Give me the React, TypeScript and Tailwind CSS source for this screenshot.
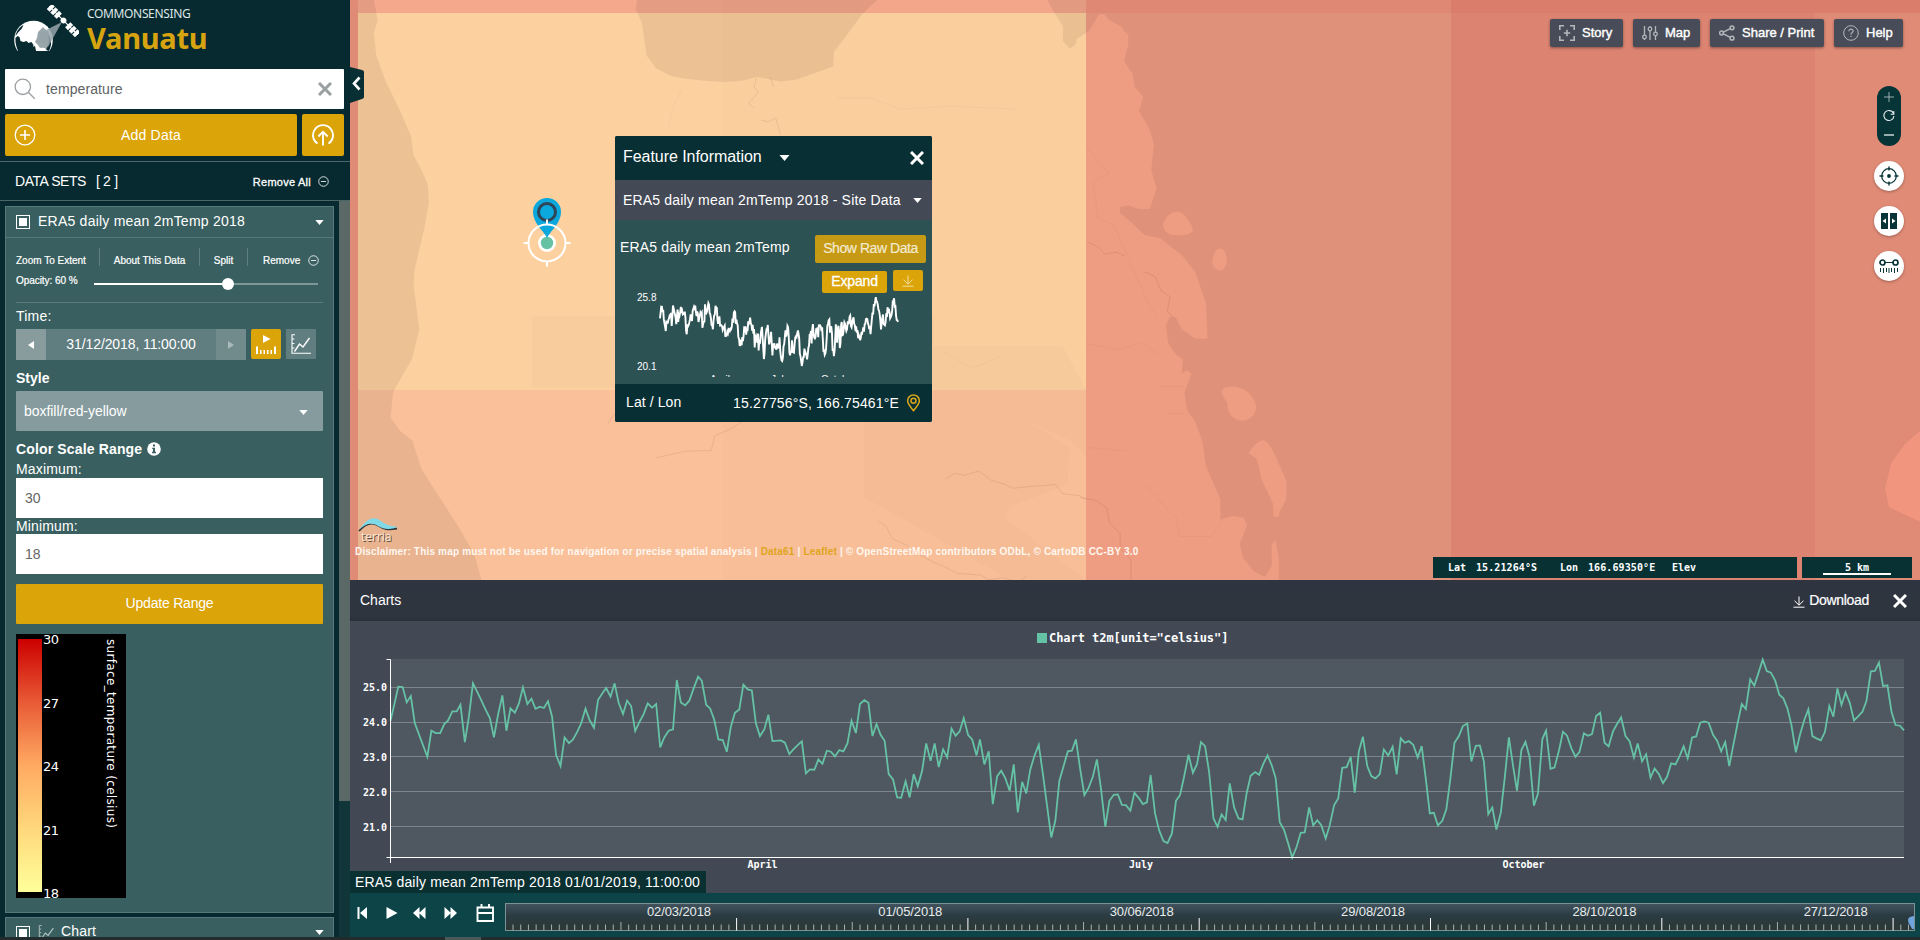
import React from "react";

/* Daily samples as x,y vertices: x runs 0..4478 over the year, y runs 0 (25.8) .. 595 (20.1). */
const PART_A =
  "120,422 132,370 143,320 156,321 168,367 180,348 192,430 229,530 241,452 254,459 267,459 279,432 290,422 303,394 316,394 327,374 340,486 352,410 364,310 377,336 389,362 401,388 414,414 426,472 438,405 451,346 463,452 475,385 488,398 500,370 512,322 525,372 537,356 549,386 562,380 574,384 586,364 598,410 610,525 623,558 635,472 648,489 660,478 672,456 684,430 697,386 709,420 722,443 734,360 746,341 758,324 771,350 783,310 795,368 808,402 820,362 832,378 844,453 857,425 869,402 881,370 894,383 906,372 918,502 930,472 943,452 956,448 967,300 979,367 992,376 1004,362 1017,325 1030,290 1041,302 1054,374 1066,386 1078,420 1090,478 1103,480 1115,515 1127,440 1139,398 1152,388 1164,314 1177,328 1189,331 1201,430 1213,468 1226,448 1238,404 1250,483 1275,481 1287,488 1300,522 1312,508 1324,496 1337,484 1349,580 1361,568 1374,569 1386,538 1398,551 1411,512 1423,515 1435,529 1448,510 1460,514 1472,490 1484,422 1497,459 1509,372 1522,360 1534,368";
const PART_B =
  "8,468 20,432 32,464 44,482 56,582 69,598 81,652 93,653 106,604 118,652 130,582 142,618 155,572 167,490 180,542 192,490 204,561 217,508 229,532 242,446 254,467 266,454 278,414 291,465 303,478 316,526 326,478 339,553 352,514 364,672 377,588 389,572 401,594 414,632 426,553 438,697 451,605 463,640 475,568 487,528 500,494 512,580 525,680 537,772 549,722 561,602 574,556 586,514 598,512 610,478 623,570 635,645 647,624 660,590 672,538 684,625 697,740 709,662 722,644 734,643 746,674 758,675 771,692 783,638 796,654 808,672 820,667 831,584 844,700 856,750 869,783 881,789 894,760 906,662 918,645 930,590 943,524 956,578 968,553 980,486 992,498 1004,575 1017,715 1029,740 1041,703 1053,720 1065,610 1078,682 1091,715 1103,718 1115,640 1127,587 1140,576 1152,584 1164,552 1177,526 1189,555 1201,594 1213,726 1226,750 1238,790 1250,832 1263,800 1275,758 1287,757 1300,682 1312,736 1324,720 1336,735 1349,775 1361,735 1374,675 1386,655 1398,563 1411,561 1423,530 1435,638 1447,514 1459,470 1472,558 1484,588 1496,595 1509,582 1521,508 1534,526";
const PART_C =
  "8,620 20,703 32,595 44,608 56,603 69,614 82,652 94,618 106,715 118,820 130,818 142,856 155,842 167,807 179,715 191,608 204,588 216,558 229,550 241,664 254,617 266,616 278,664 291,822 303,802 315,868 328,818 340,710 352,592 364,675 376,752 389,630 401,605 413,650 426,797 438,760 451,597 462,572 475,686 487,682 500,632 512,575 524,587 537,625 549,650 561,635 574,580 586,587 598,582 610,528 622,518 635,608 647,619 660,574 672,552 684,532 697,588 709,603 722,652 733,610 746,664 758,643 771,713 783,685 796,702 808,729 820,710 832,670 845,673 857,648 869,619 881,655 894,592 906,589 918,548 930,544 943,548 956,584 968,602 980,634 992,606 1004,678 1017,610 1029,548 1041,492 1053,507 1066,418 1078,437 1090,400 1103,359 1115,393 1127,398 1140,422 1152,464 1164,475 1176,505 1188,555 1201,637 1213,585 1226,540 1238,508 1250,588 1262,595 1275,601 1287,576 1300,498 1312,530 1324,445 1336,495 1348,457 1361,490 1373,541 1386,528 1398,515 1410,482 1423,394 1435,393 1447,368 1459,438 1472,436 1484,515 1496,555 1509,557 1521,571";

const shift = (part: string, dx: number, dy: number) =>
  part
    .split(" ")
    .map((p) => {
      const [x, y] = p.split(",").map(Number);
      return `${x + dx},${y + dy}`;
    })
    .join(" ");

const SERIES = [shift(PART_A, -120, -237), shift(PART_B, 1418, -237), shift(PART_C, 2957, -357)].join(" ");

function Caret({ className = "" }: { className?: string }) {
  return (
    <svg viewBox="0 0 10 6" className={`h-[5px] w-[9px] ${className}`} fill="currentColor">
      <path d="M0 0h10L5 6z" />
    </svg>
  );
}

function Cross({ className = "" }: { className?: string }) {
  return (
    <svg viewBox="0 0 14 14" className={className} fill="none" stroke="currentColor" strokeWidth="3">
      <path d="M1 1l12 12M13 1L1 13" />
    </svg>
  );
}

function MinusCircle({ className = "" }: { className?: string }) {
  return (
    <svg viewBox="0 0 12 12" className={className} fill="none" stroke="currentColor" strokeWidth="0.9">
      <circle cx="6" cy="6" r="5.2" />
      <path d="M3.2 6h5.6" />
    </svg>
  );
}

function DownloadIcon({ className = "" }: { className?: string }) {
  return (
    <svg viewBox="0 0 12 12" className={className} fill="none" stroke="currentColor" strokeWidth="1">
      <path d="M6 .5v8.5M1.5 4.8L6 9.2l4.5-4.4M.5 11.2h11" />
    </svg>
  );
}

function LineChartIcon({ className = "" }: { className?: string }) {
  return (
    <svg viewBox="0 0 20 20" className={className} fill="none" stroke="currentColor" strokeWidth="1.1">
      <path d="M4 .7H1v18.6h19M1 5h2.4M1 9.5h2.4M1 14h2.4" />
      <path d="M3.5 17.5l5-7.5 3.5 3 6.5-9" strokeWidth="1.4" />
    </svg>
  );
}

function CheckSquare() {
  return (
    <div className="h-[14px] w-[14px] border border-white p-[2px]">
      <div className="h-full w-full bg-white" />
    </div>
  );
}

function Logo() {
  return (
    <svg viewBox="0 0 66 50" className="h-[50px] w-[66px] shrink-0">
      <clipPath id="globe">
        <path d="M0 0h66v46H0z" />
      </clipPath>
      <g clipPath="url(#globe)">
        <circle cx="20.500" cy="35" r="19.300" fill="#fff" />
        <path d="M2.500 33l2-2 2 1 1 4 3 1 3-1 2 2 3-1 2 3-1 3 3 2 1 4H7c-3-4-5-10-4.500-16z" fill="#062a2f" />
        <path d="M2.500 31c1-5 4-9 8-11l-2 4-3 3z" fill="#062a2f" />
        <path d="M25 27l5-5 5 5c3 5 3 12 0 18h-7l-3-5-3-3 2-4z" fill="#9aa8ab" />
        <path d="M33 45c2-4 4-9 2-15 4 4 4 10 1 16z" fill="#062a2f" />
        <path d="M23 46c1-3 3-4 5-3 3-1 5 0 6 3z" fill="#fff" />
        <path d="M17 46l2-4 3-1 1 5z" fill="#062a2f" />
      </g>
      <path d="M49 17L27 28l-1 9 9 5z" fill="#97a5a9" opacity=".85" />
      <g transform="translate(50.5 15.5) rotate(45)" fill="#fff">
        <rect x="-20" y="-3.700" width="4" height="7.400" />
        <rect x="-15" y="-3.700" width="4" height="7.400" />
        <rect x="-10" y="-3.700" width="4" height="7.400" />
        <rect x="-20" y="-.6" width="40" height="1.200" />
        <circle cx="0" cy="0" r="2.900" />
        <rect x="6" y="-3.700" width="4" height="7.400" />
        <rect x="11" y="-3.700" width="4" height="7.400" />
        <rect x="16" y="-3.700" width="4" height="7.400" />
      </g>
    </svg>
  );
}

function Legend() {
  return (
    <div className="mt-[10px] flex h-[264px] w-[110px] bg-black pl-[2px] font-['DejaVu_Sans',sans-serif] text-white">
      <div className="mt-[5px] h-[253px] w-6 bg-[linear-gradient(#cc0000,#e85a35_25%,#ffaa62_50%,#ffd87c_75%,#ffff9a)]" />
      <div className="-mt-[1px] ml-px flex h-[267px] w-5 flex-col justify-between text-[13px] leading-[13px] tracking-[-0.500px]">
        {["30", "27", "24", "21", "18"].map((n) => (
          <span key={n}>{n}</span>
        ))}
      </div>
      <div className="ml-10 mt-[5px] whitespace-nowrap text-[12px] leading-[15px] tracking-[0.330px] [writing-mode:vertical-rl]">
        surface_temperature (celsius)
      </div>
    </div>
  );
}

function DatasetCard() {
  return (
    <section className="h-[707px] border border-[#54797a] bg-[#3a5f60]">
      <div className="flex h-[31px] items-center border-b border-[#54797a] pl-[10px] pr-[9px]">
        <CheckSquare />
        <span className="-mt-[3px] ml-[8px] text-[14px] leading-[18px] tracking-[0.230px]">ERA5 daily mean 2mTemp 2018</span>
        <Caret className="ml-auto" />
      </div>
      <div className="px-[10px]">
        <div className="mt-[10px] flex h-[18px] text-[10px] leading-[26px] [-webkit-text-stroke:0.2px_white]">
          <span className="w-[84px] border-r border-[#5f8080]">Zoom To Extent</span>
          <span className="w-[100px] border-r border-[#5f8080] text-center">About This Data</span>
          <span className="w-[48px] border-r border-[#5f8080] text-center">Split</span>
          <span className="ml-[15px]">Remove</span>
          <MinusCircle className="ml-[8px] mt-[7px] h-[11px] w-[11px]" />
        </div>
        <div className="mt-[8px] flex h-4 items-center text-[10px] [-webkit-text-stroke:0.2px_white]">
          <span className="-mt-[3px] w-[78px] tracking-[-0.050px]">Opacity: 60 %</span>
          <div className="mt-[3px] flex w-[224px] items-center">
            <div className="h-[2px] w-[128px] bg-white" />
            <div className="h-3 w-3 rounded-full bg-white" />
            <div className="h-[2px] flex-1 bg-[#7d9697]" />
          </div>
        </div>
        <div className="mt-[12px] h-px w-[307px] bg-[#5b7d7e]" />
        <div className="mt-[4px] text-[14px] leading-[18px] tracking-[0.200px]">Time:</div>
        <div className="mt-[4px] flex h-[31px]">
          <div className="flex w-[30px] items-center justify-center bg-[#889b9d]">
            <svg viewBox="0 0 6 8" className="h-2 w-[6px]" fill="#fff"><path d="M6 0v8L0 4z" /></svg>
          </div>
          <div className="w-[170px] bg-[#607d7f] text-center text-[14px] leading-[31px] tracking-[-0.1px]">31/12/2018, 11:00:00</div>
          <div className="flex w-[30px] items-center justify-center bg-[#718a8c]">
            <svg viewBox="0 0 6 8" className="h-2 w-[6px]" fill="#a9b9ba"><path d="M0 0v8l6-4z" /></svg>
          </div>
          <div className="ml-[5px] h-[30px] w-[30px] rounded-[2px] bg-[#dba409]">
            <svg viewBox="0 0 30 30" fill="#fff">
              <path d="M12 6v8l7.5-4zM5 17.5h2v7.5H5zM23 17.5h2v7.5h-2zM9 21h1.5v4H9zM12.5 21H14v4h-1.500zM16 21h1.500v4H16zM19.500 21H21v4h-1.500z" />
            </svg>
          </div>
          <div className="ml-[5px] flex h-[30px] w-[30px] items-center justify-center bg-[#607d7f]">
            <LineChartIcon className="h-[20px] w-[20px]" />
          </div>
        </div>
        <div className="mt-[9px] text-[14px] font-bold leading-[18px]">Style</div>
        <div className="mt-[4px] flex h-10 w-[307px] items-center justify-between rounded-[1px] bg-[#869b9e] pl-[8px] pr-[15px] text-[14px]">
          <span className="tracking-[-0.050px]">boxfill/red-yellow</span>
          <Caret className="mt-[3px]" />
        </div>
        <div className="mt-[9px] flex items-center text-[14px] font-bold leading-[18px] tracking-[0.150px]">
          Color Scale Range
          <svg viewBox="0 0 14 14" className="ml-[5px] h-[14px] w-[14px]">
            <circle cx="7" cy="7" r="6.8" fill="#fff" />
            <path d="M6 2.500h2v2H6zM5.200 5.800H8v4h1v1.400H5V9.800h1V7H5.200z" fill="#3a5f60" />
          </svg>
        </div>
        <div className="mt-[3px] text-[14px] leading-[17px] tracking-[0.150px]">Maximum:</div>
        <div className="h-10 w-[307px] bg-white pl-[9px] text-[14px] leading-[41px] text-[#666]">30</div>
        <div className="text-[14px] leading-[16px] tracking-[0.150px]">Minimum:</div>
        <div className="h-10 w-[307px] bg-white pl-[9px] text-[14px] leading-[41px] text-[#666]">18</div>
        <div className="mt-[10px] h-10 w-[307px] rounded-[1px] bg-[#dba409] text-center text-[14px] leading-[39px] tracking-[-0.2px]">Update Range</div>
        <Legend />
      </div>
    </section>
  );
}

function Sidebar() {
  return (
    <aside className="flex h-[937px] w-[350px] shrink-0 flex-col overflow-hidden bg-[#062a2f] text-white">
      <header className="flex h-[69px] shrink-0 pl-[13px] pt-[5px]">
        <Logo />
        <div className="ml-[8px] font-['Noto_Sans',sans-serif]">
          <div className="mt-px text-[12px] leading-[16px] tracking-[-0.350px] text-[#dfe6e6]">COMMONSENSING</div>
          <div className="text-[29px] font-bold leading-[32px] tracking-[-0.250px] text-[#d6a410]">Vanuatu</div>
        </div>
      </header>
      <div className="mx-[5px] flex h-10 w-[339px] shrink-0 items-center rounded-[1px] bg-white pl-[9px] pr-[12px]">
        <svg viewBox="0 0 22 22" className="h-[22px] w-[22px]" fill="none" stroke="#999fa1" strokeWidth="1.300">
          <circle cx="8.800" cy="8.800" r="7.700" />
          <path d="M14.300 14.300l6.500 6.500" />
        </svg>
        <span className="ml-[10px] text-[14px] tracking-[0.1px] text-[#5d6264]">temperature</span>
        <Cross className="ml-auto h-[14px] w-[14px] text-[#999fa1]" />
      </div>
      <div className="ml-[5px] mt-[5px] flex h-[42px] shrink-0 gap-[5px]">
        <div className="flex w-[292px] items-center rounded-[2px] bg-[#dba409] pl-[9px]">
          <svg viewBox="0 0 22 22" className="h-[22px] w-[22px]" fill="none" stroke="#fff" strokeWidth="1.300">
            <circle cx="11" cy="11" r="9.800" />
            <path d="M11 6v10M6 11h10" strokeWidth="1.600" />
          </svg>
          <span className="w-[230px] text-center text-[14px] tracking-[0.2px]">Add Data</span>
        </div>
        <div className="flex w-[42px] items-center justify-center rounded-[2px] bg-[#dba409]">
          <svg viewBox="0 0 22 22" className="h-[22px] w-[22px]" fill="none" stroke="#fff" strokeWidth="1.900">
            <path d="M5.500 19.500a10 10 0 1 1 11 0M11 21.500V8M6.300 12.500L11 7.800l4.700 4.700" />
          </svg>
        </div>
      </div>
      <div className="mt-[5px] flex h-10 shrink-0 items-center border-y border-[#4b6668] pl-[15px] text-[14px]">
        <span className="tracking-[-0.450px]">DATA SETS</span>
        <span className="ml-[10px] tracking-[-0.300px]">[ 2 ]</span>
        <span className="ml-auto mt-[2px] text-[11px] tracking-[0.250px] [-webkit-text-stroke:0.3px_white]">Remove All</span>
        <MinusCircle className="ml-[7px] mr-[21px] h-[11px] w-[11px]" />
      </div>
      <div className="flex min-h-0 flex-1 justify-between overflow-hidden">
        <div className="ml-[5px] w-[329px] pt-[5px]">
          <DatasetCard />
          <div className="mt-[4px] flex h-[31px] items-center border border-[#54797a] bg-[#3a5f60] pl-[10px] pr-[9px]">
            <CheckSquare />
            <LineChartIcon className="ml-[8px] h-[16px] w-[17px] text-[#b5c4c4]" />
            <span className="-mt-[3px] ml-[6px] text-[14px] leading-[18px] tracking-[0.150px]">Chart</span>
            <Caret className="ml-auto" />
          </div>
        </div>
        <div className="w-[11px] bg-[#10363a]">
          <div className="h-[600px] bg-[#5a6966]" />
        </div>
      </div>
    </aside>
  );
}

function MapBackground() {
  return (
    <svg viewBox="0 0 1570 580" className="block h-[580px] w-[1570px]">
      <rect width="1570" height="580" fill="#f1957f" />
      <rect x="8" y="13" width="728" height="377" fill="#fdd0a0" />
      <rect x="8" y="390" width="728" height="190" fill="#fac09a" />
      <rect x="8" width="728" height="13" fill="#f5a88c" />
      <rect x="736" y="13" width="365" height="567" fill="#ef9d82" />
      <rect x="736" width="365" height="13" fill="#ef927c" />
      <rect x="1101" width="364" height="580" fill="#ec8e7a" />
      <rect x="1101" width="469" height="13" fill="#ea8873" />
      <rect x="373" width="363" height="580" fill="#000" opacity=".008" />
      <g transform="scale(.4783 .3699)" fill="#000">
        <path opacity=".068" d="M0 0H50L58 55 50 90 55 150 75 220 105 300 128 370 133 420 150 460 163 500 165 550 155 620 135 730 133 770 145 890 130 970 90 1060 85 1130 105 1165 130 1190 150 1270 190 1350 230 1430 260 1500 275 1568H0z" />
        <path opacity=".068" d="M600 0L597 25 610 60 620 150 640 185 670 205 700 213 740 218 780 222 820 218 850 208 900 220 935 215 1010 180 1012 140 1030 110 1070 40 1102 0z" />
        <path opacity=".017" d="M380 855H1220V1048H380zM1075 1140H1420L1505 1210 1500 1310 1380 1370 1370 1400 1440 1470 1539 1568H1380L1180 1420 1075 1345zM1220 935H1490L1539 1053V1230L1505 1190 1420 1140H1220z" />
        <g fill="none" stroke="#5a2010" strokeOpacity=".13" strokeWidth="1.800">
          <path d="M850 210l-5 25 8 15-20 30 12 12M880 210l5 25M860 325l15 4 15-10 10 45" />
          <path d="M640 1238l60-18 55-2 8-40 35-20 30-25M540 1145l8-20 6-5" />
          <path d="M1245 1295l20-15 20 5 30-12 25 25 30 12 15 10 40-5 50-5 15 25 35 5 14 10" />
          <path d="M1105 1410l15 12 15 35 30 18 20 20 35 25 20 10 30 20 50 5 15 12 30-5 35 12 15-18" />
          <path opacity=".4" d="M665 350l10-60 20-50M1020 265l70 0 60 30 110-8 130 8M1240 950l60 45 60-30" />
        </g>
      </g>
      <g transform="translate(730 0) scale(.5357 .3699)">
        <path
          fill="#000"
          fillRule="evenodd"
          opacity=".068"
          d="M-61 0L-50 30-32 70-32 110-19 132-8 120-6 105 0 100 18 82 35 40 45 38 55 55 75 70 90 95 90 120 82 165 98 200 102 235 118 262 110 300 130 350 138 390 133 460 143 510 130 565 110 565 90 555 75 560 74 575 95 600 120 635 150 645 190 690 215 735 235 820 238 915 215 915 190 890 180 860 168 855 160 880 165 930 180 960 192 972 190 1010 200 1000 208 1010 195 1060 200 1110 215 1140 228 1190 235 1260 250 1310 262 1350 262 1405 285 1395 305 1400 312 1420 298 1470 305 1510 325 1545 345 1560 358 1530 358 1470 365 1460 371 1510 371 1568H1568V0z
             M155 605Q165 572 183 572 200 580 211 620 211 636 183 636 155 636 155 605z
             M247 705Q250 674 261 672 274 674 274 710 270 731 260 731 247 728 247 705z
             M265 1065Q260 1045 290 1045 322 1055 329 1100 325 1138 300 1137 275 1130 275 1090z
             M315 1225Q325 1195 342 1190 355 1195 370 1250L385 1300V1350L372 1385 370 1397H362L360 1360 340 1300 330 1240z
             M1568 1165L1540 1200 1515 1250 1503 1320 1510 1370 1530 1385 1568 1410z"
        />
        <g fill="none" stroke="#7a2515" strokeOpacity=".16" strokeWidth="1.800">
          <path d="M14 655l20 12 12 20 22-5 15 10M120 735l20 12 12 40 16 15-5 40 15 20M0 1345l30 8 20 20 5 40 20 30 0 40 20 30 0 55" />
          <path opacity=".35" d="M14 400l40 70-30 20 10 100 30 20 60 200 20 45M14 930l60 15 40-20 40 40M14 1210l70 8M120 1310l60 90 5 50 60 0 20-40M150 1045l45 0M165 1118l30 0" />
        </g>
      </g>
    </svg>
  );
}

function MapButton({ label, children, className }: { label: string; children: React.ReactNode; className: string }) {
  return (
    <div className={`flex h-7 items-center rounded-[2px] bg-[#484c58] pl-[9px] shadow-[0_1px_3px_rgba(0,0,0,0.4)] ${className}`}>
      <svg viewBox="0 0 16 16" className="h-4 w-4 text-[#b4b6ba]" fill="none" stroke="currentColor" strokeWidth="1.300">
        {children}
      </svg>
      <span className="-mt-px ml-[7px] text-[13px] text-white [-webkit-text-stroke:0.4px_white]">{label}</span>
    </div>
  );
}

function RoundButton({ children }: { children: React.ReactNode }) {
  return (
    <div className="flex h-[30px] w-[30px] items-center justify-center rounded-full bg-white shadow-[0_1px_3px_rgba(0,0,0,0.3)]">
      <svg viewBox="0 0 20 20" className="h-5 w-5" fill="none" stroke="#083437">{children}</svg>
    </div>
  );
}

function FeaturePanel() {
  return (
    <div className="absolute left-[265px] top-[136px] w-[317px] overflow-hidden rounded-[2px] bg-[#2d5254] text-[14px] text-white">
      <div className="flex h-[44px] items-center bg-[#082f33] pl-[8px] pr-[8px]">
        <span className="-mt-[3px] text-[16px] tracking-[-0.050px]">Feature Information</span>
        <svg viewBox="0 0 10 6" className="ml-[17px] h-[6px] w-[11px]" fill="#fff"><path d="M0 0h10L5 6z" /></svg>
        <Cross className="ml-auto h-[14px] w-[14px]" />
      </div>
      <div className="flex h-10 items-center bg-[#444956] pl-[8px] pr-[10px]">
        <span className="whitespace-nowrap tracking-[0.180px]">ERA5 daily mean 2mTemp 2018 - Site Data</span>
        <Caret className="ml-auto" />
      </div>
      <div className="h-[164px] pl-[5px] pr-[6px] pt-[15px]">
        <div className="flex h-7 items-center justify-between">
          <span className="-mt-[3px] tracking-[0.180px]">ERA5 daily mean 2mTemp</span>
          <span className="h-7 w-[111px] rounded-[2px] bg-[#c69a14] text-center text-[14px] leading-[27px] tracking-[-0.450px] text-[#f3ead0] [-webkit-text-stroke:0.2px_#f3ead0]">Show Raw Data</span>
        </div>
        <div className="mr-[3px] mt-[7px] flex justify-end gap-[6px]">
          <span className="mt-[1px] h-[22px] w-[65px] rounded-[2px] bg-[#dba409] text-center leading-[21px] tracking-[-0.150px] [-webkit-text-stroke:0.3px_white]">Expand</span>
          <span className="flex h-[21px] w-[30px] items-center justify-center rounded-[2px] bg-[#dba409] text-[#f5dfa5]">
            <DownloadIcon className="h-[12px] w-[12px]" />
          </span>
        </div>
        <div className="-mt-[1px] flex h-[81px] pl-[17px] text-[10px]">
          <div className="flex w-[23px] shrink-0 flex-col justify-between">
            <span className="leading-[12px]">25.8</span>
            <span className="leading-[12px]">20.1</span>
          </div>
          <svg viewBox="0 0 4478 595" preserveAspectRatio="none" className="mt-[5px] h-[69px] w-[238px] shrink-0 overflow-visible">
            <polyline points={SERIES} fill="none" stroke="#fff" strokeWidth="1.900" vectorEffect="non-scaling-stroke" />
          </svg>
        </div>
        <div className="flex h-[4px] overflow-hidden text-[10px] leading-[13px]">
          <span className="ml-[90px] w-[61px]">April</span>
          <span className="w-[50px]">July</span>
          <span>October</span>
        </div>
      </div>
      <div className="flex h-[38px] items-center bg-[#082f33] pl-[11px] pr-[11px]">
        <span className="-mt-[1px] tracking-[0.100px]">Lat / Lon</span>
        <span className="ml-auto mt-px tracking-[0.160px]">15.27756°S, 166.75461°E</span>
        <svg viewBox="0 0 16 20" className="ml-[7px] h-[18px] w-[15px]" fill="none" stroke="#d6a51a" strokeWidth="1.700">
          <path d="M8 18.500C5 15 1.500 11 1.500 7.500a6.500 6.500 0 0 1 13 0C14.500 11 11 15 8 18.500z" />
          <circle cx="8" cy="7.500" r="2.800" />
        </svg>
      </div>
    </div>
  );
}

function MapArea() {
  return (
    <div className="relative h-[580px] w-[1570px] overflow-hidden">
      <MapBackground />

      <svg viewBox="0 0 14 36" className="absolute left-0 top-[67px] h-[36px] w-[14px]">
        <path d="M0 0l12 3q2 .5 2 2v25q0 1.500-2 2L0 36z" fill="#082f33" />
        <path d="M9.500 10.500L4 16.500l5.500 6" fill="none" stroke="#fff" strokeWidth="2.600" />
      </svg>

      <svg viewBox="0 0 48 72" className="absolute left-[173px] top-[196px] h-[72px] w-[48px]">
        <path d="M24 42C20 34 10 27 10 16a14 14 0 0 1 28 0c0 11-10 18-14 26z" fill="#0aa8dc" />
        <circle cx="24" cy="16" r="8.500" fill="none" stroke="#2f4459" strokeWidth="3" />
        <circle cx="24" cy="47" r="9" fill="#fff" />
        <circle cx="24" cy="47" r="6.200" fill="#66c2a2" />
        <path d="M24 42l-6.500-12h13z" fill="#0aa8dc" />
        <g stroke="#fff" strokeWidth="2" fill="none">
          <circle cx="24" cy="47" r="18.500" />
          <path d="M24 23.500v5M24 65.500v5M.500 47h5M42.500 47h5" />
        </g>
      </svg>

      <FeaturePanel />

      <div className="absolute right-[17px] top-[19px] flex gap-[10px]">
        <MapButton label="Story" className="w-[73px]">
          <path d="M.800 5V.800H5M11 .800h4.200V5M15.200 11v4.200H11M5 15.200H.800V11M8 4.800v6.400M4.800 8h6.400" strokeWidth="1.600" />
        </MapButton>
        <MapButton label="Map" className="w-[67px]">
          <path d="M2.500 1v9M2.500 14v1M8 1v1M8 6v9M13.500 1v6M13.500 11v4" />
          <circle cx="2.500" cy="12" r="1.800" />
          <circle cx="8" cy="4" r="1.800" />
          <circle cx="13.500" cy="9" r="1.800" />
        </MapButton>
        <MapButton label="Share / Print" className="w-[114px]">
          <circle cx="2.500" cy="8" r="1.900" strokeWidth="1.500" />
          <circle cx="13" cy="2.800" r="1.900" strokeWidth="1.500" />
          <circle cx="13" cy="13.200" r="1.900" strokeWidth="1.500" />
          <path d="M4.300 7.200l7-3.500M4.300 8.800l7 3.500" strokeWidth="1.500" />
        </MapButton>
        <MapButton label="Help" className="w-[69px]">
          <circle cx="8" cy="8" r="7.300" strokeWidth="1" />
          <path d="M5.900 6.300c0-3 4.300-2.700 4.200-.2 0 1.500-2.100 1.600-2.100 3.300M8 10.800v1.300" strokeWidth="1.200" />
        </MapButton>
      </div>

      <div className="absolute right-[16px] top-[86px] flex flex-col items-center gap-[15px]">
        <svg viewBox="0 0 24 60" className="h-[60px] w-6" fill="none">
          <rect width="24" height="60" rx="12" fill="#073437" />
          <path d="M12 6v10M7 11h10" stroke="#a9babb" strokeWidth=".9" />
          <path d="M7 49h10" stroke="#a9babb" strokeWidth="1.800" />
          <path d="M16.500 27.500a5 5 0 1 0 .4 2.500M16.800 25v3.200h-3.200" stroke="#e5ecec" strokeWidth="1.100" />
        </svg>
        <RoundButton>
          <circle cx="10" cy="10" r="7.300" strokeWidth="1.300" />
          <circle cx="10" cy="10" r="1.900" fill="#083437" stroke="none" />
          <path d="M10 .500v4M10 15.500v4M.500 10h4M15.500 10h4" strokeWidth="1.400" />
        </RoundButton>
        <RoundButton>
          <path d="M2 2h7v16H2zM11 2h7v16h-7z" fill="#083437" stroke="none" />
          <path d="M7 7.500v5L3.500 10zM13 7.500v5l3.500-2.500z" fill="#fff" stroke="none" />
        </RoundButton>
        <RoundButton>
          <circle cx="3.500" cy="6.500" r="2.500" strokeWidth="1.700" />
          <circle cx="16.500" cy="6.500" r="2.500" strokeWidth="1.700" />
          <path d="M6 6.500h8" strokeWidth="1" />
          <path d="M1.500 12v4M4.500 12v5M7.500 12v4M10 12v5M12.500 12v4M15.500 12v5M18.500 12v4" strokeWidth="1" />
        </RoundButton>
      </div>

      <div className="absolute left-[8px] top-[517px] w-[42px]">
        <svg viewBox="0 0 42 16" className="block h-4 w-[42px]">
          <path d="M1 14C8 6 14 5 20 8.500c6 4 10 4.500 19 3" fill="none" stroke="#2f3a3c" strokeWidth="1.800" />
          <path d="M1.500 12.500C9 1 16-1 22 3.500c5 3.500 9 5.500 18 6.500-8 3-14 2.500-20-1C14 5 8 6 1.500 12.500z" fill="#7fd9e6" />
        </svg>
        <div className="-mt-[3px] pl-[3px] font-['Open_Sans',sans-serif] text-[12px] leading-[14px] text-[#fbe9d8] [text-shadow:1px_1px_0_#5c4a3c]">terria</div>
      </div>

      <div className="absolute left-[5px] top-[545px] whitespace-nowrap text-[10px] font-bold leading-[14px] tracking-[0.180px] text-[#fff7ef]">
        Disclaimer: This map must not be used for navigation or precise spatial analysis | <span className="text-[#dfa520]">Data61</span> |{" "}
        <span className="text-[#dfa520]">Leaflet</span> | © OpenStreetMap contributors ODbL, © CartoDB CC-BY 3.0
      </div>

      <div className="absolute right-[8px] top-[557px] flex h-[21px] gap-[5px] font-['DejaVu_Sans_Mono',monospace] text-[10px] font-bold leading-[21px] text-white">
        <div className="flex w-[364px] whitespace-pre bg-[#083134] pl-[15px]">
          <span className="w-[28px]">Lat</span>
          <span className="w-[84px] tracking-[0.100px]">15.21264°S</span>
          <span className="w-[28px]">Lon</span>
          <span className="w-[84px] tracking-[0.100px]">166.69350°E</span>
          <span>Elev</span>
        </div>
        <div className="w-[110px] bg-[#083134] text-center">
          <div className="h-[17px]">5 km</div>
          <div className="mx-auto -mt-px h-[2px] w-[68px] bg-white" />
        </div>
      </div>
    </div>
  );
}

function Charts() {
  return (
    <div className="flex h-[313px] flex-col bg-[#424955] text-white">
      <div className="flex h-[41px] items-center bg-[linear-gradient(#2f3540,#2f353f_88%,#282f38)] pl-[10px] pr-[13px] text-[14px]">
        <span className="-mt-[1px]">Charts</span>
        <DownloadIcon className="ml-auto mt-[2px] h-[12px] w-[12px]" />
        <span className="-mt-[1px] ml-[4px] tracking-[-0.300px] [-webkit-text-stroke:0.2px_white]">Download</span>
        <Cross className="ml-[24px] h-[14px] w-[14px]" />
      </div>
      <div className="flex h-[38px] items-center pb-[5px] pl-[687px] font-['DejaVu_Sans_Mono',monospace] text-[12px] font-bold tracking-[-0.050px]">
        <span className="mr-[2px] h-[10px] w-[10px] bg-[#66c2a5]" />
        Chart t2m[unit="celsius"]
      </div>
      <svg viewBox="350 659 1570 57" className="h-[234px] w-[1570px] overflow-visible" preserveAspectRatio="xMinYMin">
        <rect x="390.500" y="659" width="1513.500" height="198.500" fill="#4f5761" />
        {[687.5, 722.5, 756.5, 791.5, 826.5].map((y) => (
          <path key={y} d={`M390.500 ${y}H1904`} stroke="#7d848c" />
        ))}
        <svg x="390.500" y="659" width="1513.500" height="198.500" viewBox="0 0 4478 595" preserveAspectRatio="none" overflow="visible">
          <polyline points={SERIES} fill="none" stroke="#66c2a5" strokeWidth="1.800" vectorEffect="non-scaling-stroke" />
        </svg>
        <path d="M386.500 659.500h4V863M386.500 857.500H1904" fill="none" stroke="#fff" />
        <g className="font-['DejaVu_Sans_Mono',monospace] text-[10px] font-bold" fill="#fff">
          {["25.0", "24.0", "23.0", "22.0", "21.0"].map((t, i) => (
            <text key={t} x="387" y={691.300 + i * 34.800} textAnchor="end">{t}</text>
          ))}
          <text x="762.500" y="868" textAnchor="middle">April</text>
          <text x="1141" y="868" textAnchor="middle">July</text>
          <text x="1523.500" y="868" textAnchor="middle">October</text>
        </g>
      </svg>
    </div>
  );
}

const DATES = ["02/03/2018", "01/05/2018", "30/06/2018", "29/08/2018", "28/10/2018", "27/12/2018"];

function Timeline() {
  const ticks = Array.from({ length: 182 }, (_, i) => i - 29);
  return (
    <div className="relative flex h-[44px] bg-[#0c4448] text-white">
      <div className="absolute -top-[22px] left-0 h-[22px] w-[356px] whitespace-nowrap bg-[#0a3032] pl-[5px] text-[14px] leading-[22px] tracking-[0.190px]">
        ERA5 daily mean 2mTemp 2018 01/01/2019, 11:00:00
      </div>
      <svg viewBox="0 0 155 44" className="h-[44px] w-[155px] shrink-0" fill="#fff">
        <path d="M7.500 14h2v12h-2zM17 14v12l-7-6z" />
        <path d="M36.500 14v12l11-6z" />
        <path d="M69.500 14v12l-6.500-6zM75.500 14v12l-6.500-6z" />
        <path d="M94.500 14v12l6.500-6zM100.500 14v12l6.500-6z" />
        <path d="M127.500 14.500h15.500V28h-15.500zM127 20h16M131.500 11v4M139 11v4" fill="none" stroke="#fff" strokeWidth="1.900" />
      </svg>
      <svg viewBox="505 903 1410 28" className="mt-[10px] h-[28px] w-[1410px]">
        <defs>
          <linearGradient id="tl" x1="0" y1="0" x2="0" y2="1">
            <stop offset="0" stopColor="#44545f" />
            <stop offset=".45" stopColor="#2b3b42" />
            <stop offset="1" stopColor="#2c3835" />
          </linearGradient>
        </defs>
        <rect x="505.500" y="903.500" width="1409" height="27" fill="url(#tl)" stroke="#7e9194" />
        {ticks.map((i) => {
          const x = 736.600 + i * 7.710;
          if (x > 1909) return null;
          const major = ((i % 30) + 30) % 30 === 0;
          const mid = ((i % 30) + 30) % 30 === 15;
          return <path key={i} d={`M${x} ${major ? 918 : mid ? 922 : 924.500}V930.500`} stroke={major ? "#fff" : "#a6b0b0"} />;
        })}
        <g className="font-['Liberation_Sans',Arial,sans-serif] text-[13px]" fill="#e8ecec">
          {DATES.map((d, i) => (
            <text key={d} x={679.000 + i * 231.350} y="916" textAnchor="middle" textLength="64">{d}</text>
          ))}
        </g>
        <path d="M1914 916q-6 .5-6 4 0 3 2 5l2 4h2z" fill="#6fa4dc" />
      </svg>
    </div>
  );
}

export default function App() {
  return (
    <div className="h-[940px] w-[1920px] overflow-hidden bg-[#222c2d] font-['Liberation_Sans',Arial,sans-serif]">
      <div className="flex h-[937px]">
        <Sidebar />
        <main className="flex w-[1570px] flex-col">
          <MapArea />
          <Charts />
          <Timeline />
        </main>
      </div>
      <div className="ml-[445px] h-[3px] w-[36px] bg-[#4b5a58]" />
    </div>
  );
}
